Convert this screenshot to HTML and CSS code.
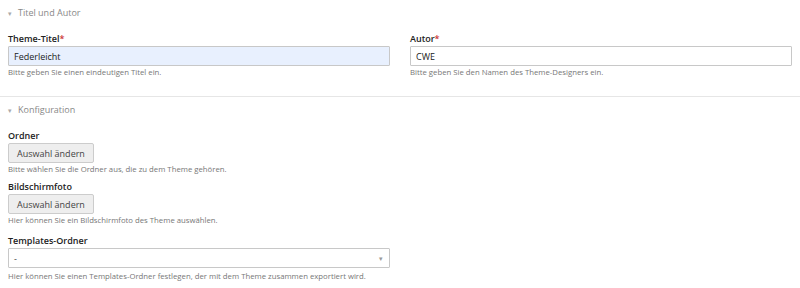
FILE: index.html
```html
<!DOCTYPE html>
<html lang="de">
<head>
  <meta charset="UTF-8" />
  <title>Theme bearbeiten</title>
  <link rel="stylesheet" href="styles.css">
</head>
<body>

  <fieldset class="panel">
    <legend class="panel-legend"><span class="toggle">&#9662;</span>Titel und Autor</legend>
    <div class="row-2">
      <div class="widget">
        <label for="name">Theme-Titel<span class="mandatory">*</span></label>
        <input type="text" id="name" class="tl-text autofill" value="Federleicht">
        <p class="tl-help">Bitte geben Sie einen eindeutigen Titel ein.</p>
      </div>
      <div class="widget">
        <label for="author">Autor<span class="mandatory">*</span></label>
        <input type="text" id="author" class="tl-text" value="CWE">
        <p class="tl-help">Bitte geben Sie den Namen des Theme-Designers ein.</p>
      </div>
    </div>
  </fieldset>

  <fieldset class="panel">
    <legend class="panel-legend"><span class="toggle">&#9662;</span>Konfiguration</legend>

    <div class="widget">
      <label>Ordner</label>
      <button type="button" class="tl-submit">Auswahl ändern</button>
      <p class="tl-help">Bitte wählen Sie die Ordner aus, die zu dem Theme gehören.</p>
    </div>

    <div class="widget">
      <label>Bildschirmfoto</label>
      <button type="button" class="tl-submit">Auswahl ändern</button>
      <p class="tl-help">Hier können Sie ein Bildschirmfoto des Theme auswählen.</p>
    </div>

    <div class="widget widget-select">
      <label for="templates">Templates-Ordner</label>
      <div class="tl-select">
        <span>-</span>
        <span class="arrow">&#9662;</span>
      </div>
      <p class="tl-help help-after-select">Hier können Sie einen Templates-Ordner festlegen, der mit dem Theme zusammen exportiert wird.</p>
    </div>
  </fieldset>

</body>
</html>
```

FILE: styles.css
```css
* {
  box-sizing: border-box;
}

body {
  margin: 0;
  background: #fff;
  font-family: 'Open Sans', sans-serif;
  font-size: 9px;
  color: #222;
}

.panel {
  margin: 0;
  padding: 0 8px;
  border: none;
  border-bottom: 1px solid #e6e6e6;
  min-width: 0;
}

.panel:last-child {
  border-bottom: none;
}

.panel-legend {
  float: left;
  width: 100%;
  padding: 6px 0 6px;
  line-height: 14px;
  font-size: 9px;
  color: #888;
}

.toggle {
  display: inline-block;
  width: 10px;
  font-size: 7px;
  color: #aaa;
}

.row-2 {
  clear: both;
  display: grid;
  grid-template-columns: 382px 382px;
  column-gap: 20px;
  padding-bottom: 18px;
}

.widget {
  clear: both;
  padding-top: 6px;
}

.widget-select {
  padding-top: 9px;
}

label {
  display: block;
  line-height: 12px;
  margin-bottom: 1px;
  font-weight: 600;
  color: #222;
}

.mandatory {
  color: #c33;
}

.tl-text {
  display: block;
  width: 100%;
  height: 20px;
  padding: 0 5px;
  border: 1px solid #c8c8c8;
  border-radius: 1px;
  font-family: inherit;
  font-size: 9px;
  color: #222;
  background: #fff;
}

.tl-text.autofill {
  background: #e8f0fe;
}

.tl-submit {
  display: block;
  height: 20px;
  padding: 0 8px;
  border: 1px solid #ccc;
  border-radius: 2px;
  background: #eee;
  font-family: inherit;
  font-size: 9px;
  color: #444;
}

.tl-select {
  display: flex;
  align-items: center;
  justify-content: space-between;
  width: 382px;
  height: 20px;
  padding: 0 6px 0 5px;
  border: 1px solid #c8c8c8;
  border-radius: 1px;
  color: #444;
}

.tl-select .arrow {
  font-size: 7px;
  color: #999;
}

.tl-help {
  margin: 0;
  line-height: 12px;
  font-size: 7.75px;
  color: #777;
}

.help-after-select {
  margin-top: 2px;
}
```
